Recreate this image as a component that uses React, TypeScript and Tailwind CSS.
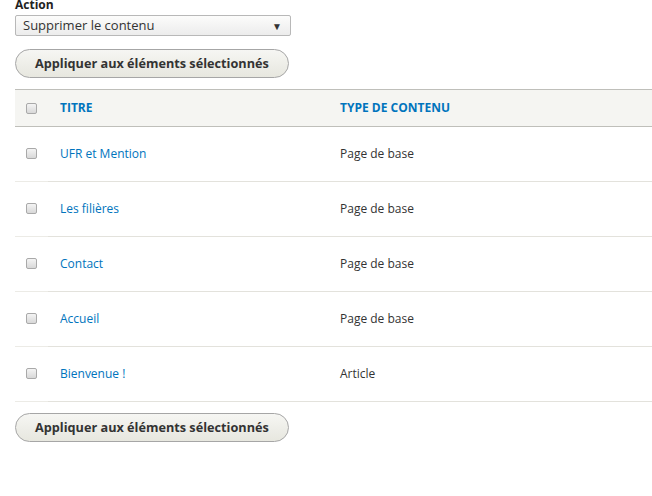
import React from "react";

const rows = [
  { title: "UFR et Mention", type: "Page de base" },
  { title: "Les filières", type: "Page de base" },
  { title: "Contact", type: "Page de base" },
  { title: "Accueil", type: "Page de base" },
  { title: "Bienvenue !", type: "Article" },
];

const Checkbox = () => (
  <span className="block w-[11px] h-[11px] rounded-[2px] border border-[#a9a9a9] bg-gradient-to-b from-[#f4f4f4] to-[#d8d8d8]" />
);

const ApplyButton = () => (
  <button className="h-[29px] px-[19px] rounded-full border border-[#a6a6a6] bg-gradient-to-b from-[#f6f6f3] to-[#e7e7df] text-[12.7px] font-bold text-[#333] leading-none">
    Appliquer aux éléments sélectionnés
  </button>
);

export default function App() {
  return (
    <div className="w-[652px] h-[496px] bg-white font-['Open_Sans',sans-serif] text-[#333] overflow-hidden">
      <div className="pl-[15px] -mt-[4px]">
        <div className="text-[12px] font-bold leading-[18px] text-[#222]">Action</div>
        <div className="mt-[1px] w-[276px] h-[21px] border border-[#b8b8b8] rounded-[2px] bg-gradient-to-b from-[#fcfcfb] to-[#ececec] flex items-center justify-between pl-[7px] pr-[8px]">
          <span className="text-[13px] leading-none">Supprimer le contenu</span>
          <span className="text-[10px] text-[#333] leading-none">▼</span>
        </div>
        <div className="mt-[13px]">
          <ApplyButton />
        </div>
      </div>
      <div className="mt-[11px] pl-[15px]">
        <div className="h-[38px] border-y border-[#bfbfba] bg-[#f5f5f2] flex items-center text-[12px] font-bold text-[#0074bd] uppercase">
          <div className="w-[33px] flex justify-center">
            <Checkbox />
          </div>
          <div className="w-[292px] pl-[12px]">Titre</div>
          <div>Type de contenu</div>
        </div>
        {rows.map((r) => (
          <div key={r.title} className="h-[55px] flex items-center text-[12px]">
            <div className="w-[33px] h-full flex justify-center pt-[21px] border-b border-[#ecebe6]">
              <Checkbox />
            </div>
            <div className="flex-1 h-full flex items-center border-b border-[#e3e2dc]">
              <div className="w-[292px] pl-[12px] text-[#0074bd]">{r.title}</div>
              <div>{r.type}</div>
            </div>
          </div>
        ))}
        <div className="mt-[11px]">
          <ApplyButton />
        </div>
      </div>
    </div>
  );
}
